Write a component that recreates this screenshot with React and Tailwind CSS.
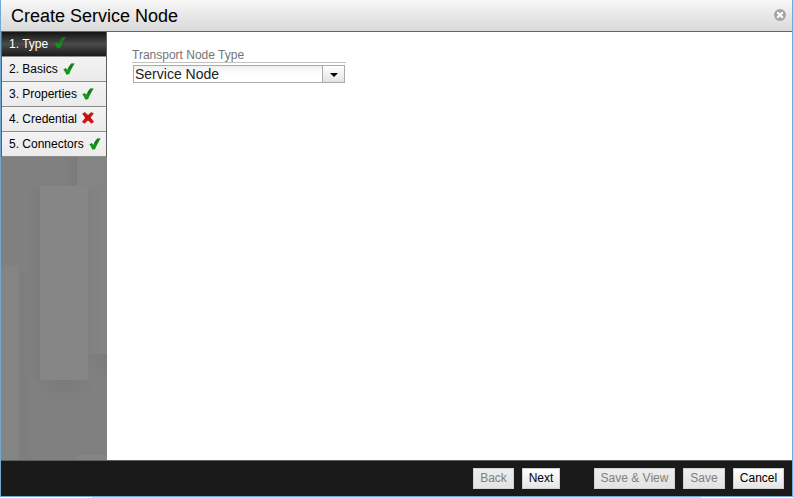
import React from "react";

function Check({ raised }) {
  return (
    <svg width="12" height="12" viewBox="0 0 12 12" className={"shrink-0 " + (raised ? "mb-[2px] opacity-90" : "")}>
      <defs>
        <linearGradient id="checkFill" x1="0" y1="0" x2="0" y2="1">
          <stop offset="0" stopColor="#2f7d33" />
          <stop offset="0.35" stopColor="#0b7d10" />
          <stop offset="0.7" stopColor="#14a018" />
          <stop offset="1" stopColor="#0a8a0f" />
        </linearGradient>
      </defs>
      <path d="M0.3 6.6 L2.7 5 L4.4 6.8 C5.4 4 6.8 1.6 8.6 0.2 L11.7 0.4 C9.7 3.2 7.9 6.8 6 11.2 L3.2 11.6 C2.5 9.5 1.5 7.8 0.3 6.6 Z" fill="url(#checkFill)" />
    </svg>
  );
}

function Cross() {
  return (
    <svg width="12" height="12" viewBox="0 0 12 12" className="mb-[2px] shrink-0">
      <defs>
        <linearGradient id="crossFill" x1="0" y1="0" x2="0" y2="1">
          <stop offset="0" stopColor="#b52a2c" />
          <stop offset="0.4" stopColor="#c01012" />
          <stop offset="1" stopColor="#dc1719" />
        </linearGradient>
      </defs>
      <path d="M0.2 1.8 L2.9 0.1 L6 3 L9.3 0.1 L11.8 1.5 L8.6 5.6 L12 9.7 L9.5 11.7 L6 8.6 L2.5 11.7 L0 9.9 L3.2 5.8 Z" fill="url(#crossFill)" />
    </svg>
  );
}

const steps = [
  { label: "1. Type", width: "w-[45px]", ok: true, active: true },
  { label: "2. Basics", width: "w-[54px]", ok: true },
  { label: "3. Properties", width: "w-[73px]", ok: true },
  { label: "4. Credential", width: "w-[73px]", ok: false },
  { label: "5. Connectors", width: "w-[80px]", ok: true },
];

function Step({ label, width, ok, active }) {
  return (
    <div
      className={
        "flex h-[25px] items-center border-b border-[#8c8c8c] pl-[7px] " +
        (active
          ? "bg-linear-to-b from-[#151515] via-[#4b4b4b] to-[#1c1c1c] text-white"
          : "bg-linear-to-b from-[#f3f3f3] to-[#ebebeb] text-black")
      }
    >
      <span className={"shrink-0 whitespace-nowrap " + width}>{label}</span>
      {ok ? <Check raised={active} /> : <Cross />}
    </div>
  );
}

function Backdrop() {
  return (
    <svg width="106" height="303" viewBox="0 0 106 303" className="block">
      <defs>
        <linearGradient id="edge" x1="0" x2="1">
          <stop offset="0" stopColor="#808080" />
          <stop offset="1" stopColor="#7b7b7b" />
        </linearGradient>
        <linearGradient id="edgeRight" x1="0" x2="1">
          <stop offset="0" stopColor="#818181" />
          <stop offset="1" stopColor="#848484" />
        </linearGradient>
        <radialGradient id="under" cx="0.5" cy="0" r="1" gradientTransform="translate(0.5 0) scale(0.6 1) translate(-0.5 0)">
          <stop offset="0" stopColor="#7a7a7a" />
          <stop offset="1" stopColor="#808080" />
        </radialGradient>
        <linearGradient id="underRight" x1="1" x2="0.4" y1="0" y2="1">
          <stop offset="0" stopColor="#7b7b7b" />
          <stop offset="1" stopColor="#808080" />
        </linearGradient>
      </defs>
      <rect width="106" height="303" fill="#808080" />
      <rect x="60" width="16" height="29" fill="url(#edge)" />
      <rect x="76" width="30" height="197" fill="#848484" />
      <rect x="26" y="32" width="13" height="190" fill="url(#edge)" />
      <rect x="87" y="29" width="14" height="168" fill="url(#edgeRight)" />
      <rect x="34" y="223" width="58" height="24" fill="url(#under)" />
      <rect x="87" y="197" width="19" height="26" fill="url(#underRight)" />
      <rect x="18" y="115" width="10" height="188" fill="#7e7e7e" />
      <rect y="108" width="18" height="195" fill="#848484" />
      <rect x="39" y="29" width="48" height="194" fill="#868686" />
      <rect x="76" y="298" width="30" height="5" fill="#858585" />
    </svg>
  );
}

function Button({ children, className, disabled }) {
  return (
    <button
      type="button"
      disabled={disabled}
      className={
        "flex h-[21px] shrink-0 items-center justify-center whitespace-nowrap border pb-[2px] text-[12px] " +
        (disabled
          ? "border-[#d2d2d2] bg-linear-to-b from-[#ededed] to-[#e3e3e3] text-[#808080] "
          : "border-[#cfcfcf] bg-linear-to-b from-white to-[#e5e5e5] text-black ") +
        className
      }
    >
      {children}
    </button>
  );
}

export default function App() {
  return (
    <div className="h-[498px] w-[793px] overflow-hidden bg-white font-['Liberation_Sans',Arial,sans-serif]">
      <div className="flex h-[497px] flex-col border-x border-b border-[#72a8d4]">
        <header className="flex h-8 shrink-0 items-center justify-between border-b border-[#656565] bg-linear-to-b from-[#f7f7f7] to-[#d9d9d9] pl-[10px] pr-[6px]">
          <h1 className="text-[18px] leading-[20px] text-black">Create Service Node</h1>
          <svg width="12" height="12" viewBox="0 0 12 12" className="-mt-[2px]">
            <circle cx="6" cy="6" r="6" fill="#a6a6a6" />
            <path d="M3.2 3.2 L8.8 8.8 M8.8 3.2 L3.2 8.8" stroke="#fff" strokeWidth="2" />
          </svg>
        </header>
        <div className="flex min-h-0 flex-1">
          <aside className="w-[106px] shrink-0 text-[12px]">
            <nav className="border-x border-[#5f5f5f]">
              {steps.map((s) => (
                <Step key={s.label} {...s} />
              ))}
            </nav>
            <Backdrop />
          </aside>
          <main className="pl-[25px] pt-4">
            <div className="w-[214px] border-b border-[#c2c2c2] text-[12px] leading-[14px] text-[#757575]">
              Transport Node Type
            </div>
            <div className="mt-[2px] ml-px flex h-[18px] w-[212px] border border-[#ababab]">
              <div className="flex-1 bg-linear-to-b from-[#f0f0f0] to-white to-50% pl-px text-[14px] leading-4 text-[#222]">
                Service Node
              </div>
              <div className="flex w-[22px] items-center justify-center border-l border-[#ababab] bg-linear-to-b from-white to-[#e4e4e4] pt-px">
                <svg width="8" height="4" viewBox="0 0 8 4">
                  <path d="M0 0 H8 L4 4 Z" fill="#000" />
                </svg>
              </div>
            </div>
          </main>
        </div>
        <footer className="flex h-9 shrink-0 items-start justify-end gap-2 border-t border-[#5c605e] bg-[#1a1a1a] pr-2 pt-[7px]">
          <Button disabled className="w-[41px]">Back</Button>
          <Button className="mr-[26px] w-[38px]">Next</Button>
          <Button disabled className="w-[81px]">Save &amp; View</Button>
          <Button disabled className="w-[42px]">Save</Button>
          <Button className="w-[51px]">Cancel</Button>
        </footer>
      </div>
      <div className="ml-[92px] h-px w-[609px] bg-[#d5d7d9]" />
    </div>
  );
}
